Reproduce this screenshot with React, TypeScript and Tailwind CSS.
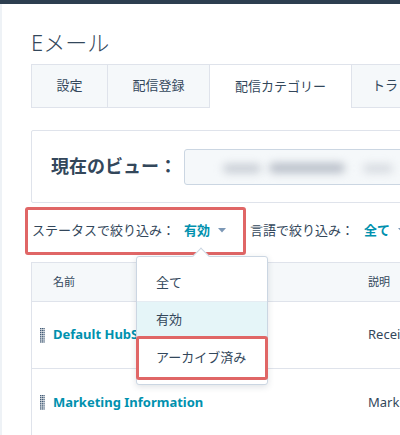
import React from "react";

const font = { fontFamily: '"Noto Sans", "Noto Sans CJK JP", sans-serif' };

function Caret({ color = "#7c98b6" }: { color?: string }) {
  return (
    <svg width="8" height="5" viewBox="0 0 8 5" className="ml-[8px] shrink-0">
      <path d="M0 0 L8 0 L4 4.5 Z" fill={color} />
    </svg>
  );
}

function Handle() {
  const dots = [];
  for (let r = 0; r < 8; r++) {
    for (let c = 0; c < 3; c++) {
      dots.push(<rect key={`${r}-${c}`} x={c * 1.7} y={r * 1.9} width="1.3" height="1.3" fill="#425b76" />);
    }
  }
  return (
    <svg width="5" height="15" viewBox="0 0 5 15" className="shrink-0">
      {dots}
    </svg>
  );
}

export default function App() {
  return (
    <div className="relative w-[400px] h-[435px] overflow-hidden bg-white text-[#33475b]" style={font}>
      <div className="h-[4px] bg-[#2d3e50]" />
      <div className="border-l-2 border-[#eef2f6] h-[431px] pl-[29px]">
        <div className="pt-[23px] h-[60px] text-[22px] leading-[30px] font-light text-[#33475b]">Eメール</div>
        <div className="flex h-[44px] text-[13px] text-[#33475b] w-[400px]">
          <div className="shrink-0 w-[77px] flex items-center justify-center bg-[#f5f8fa] border border-[#dfe3eb]">設定</div>
          <div className="shrink-0 w-[102px] flex items-center justify-center bg-[#f5f8fa] border border-l-0 border-[#dfe3eb]">配信登録</div>
          <div className="shrink-0 w-[141px] flex items-center justify-center bg-white border-t border-[#dfe3eb]">配信カテゴリー</div>
          <div className="shrink-0 w-[100px] flex items-center pl-[20px] bg-[#f5f8fa] border border-[#dfe3eb] whitespace-nowrap">トラッキング</div>
        </div>
        <div className="h-[22px]" />
        <div className="flex items-center h-[73px] border border-[#dfe3eb] rounded-[2px] pl-[19px] w-[400px]">
          <div className="shrink-0 text-[18px] font-bold text-[#33475b] w-[133px] whitespace-nowrap">現在のビュー：</div>
          <div className="shrink-0 relative h-[36px] w-[240px] bg-[#f5f8fa] border border-[#cbd6e2] rounded-[3px] overflow-hidden">
            <div className="absolute left-[38px] top-[14px] w-[38px] h-[9px] rounded-full bg-[#c7ccd4] blur-[4px]" />
            <div className="absolute left-[84px] top-[13px] w-[76px] h-[10px] rounded-full bg-[#b8bec8] blur-[4px]" />
            <div className="absolute left-[178px] top-[14px] w-[30px] h-[9px] rounded-full bg-[#d6dae0] blur-[4px]" />
          </div>
        </div>
        <div className="flex items-center h-[52px] pt-[3px] text-[13px] whitespace-nowrap w-[420px]">
          <span className="shrink-0 pl-[1px]">ステータスで絞り込み：</span>
          <span className="shrink-0 ml-[9px] font-bold text-[#0091ae]">有効</span>
          <Caret />
          <span className="shrink-0 ml-[24px]">言語で絞り込み：</span>
          <span className="shrink-0 ml-[10px] font-bold text-[#0091ae]">全て</span>
          <Caret />
        </div>
        <div className="h-[7px]" />
        <div className="w-[400px] border-l border-[#dfe3eb]">
          <div className="flex items-center h-[40px] bg-[#f5f8fa] border-t border-b border-[#dfe3eb] text-[11px] text-[#33475b]">
            <span className="shrink-0 pl-[21px] w-[336px]">名前</span>
            <span className="shrink-0">説明</span>
          </div>
          <div className="flex items-center h-[67px] border-b border-[#dfe3eb] text-[13px]">
            <div className="shrink-0 pl-[8px] w-[336px] flex items-center gap-[8px]">
              <Handle />
              <span className="font-bold text-[#0091ae] whitespace-nowrap">Default HubSpot Subscription</span>
            </div>
            <span className="shrink-0 text-[#33475b] whitespace-nowrap">Receive emails</span>
          </div>
          <div className="flex items-center h-[67px] text-[13px]">
            <div className="shrink-0 pl-[8px] w-[336px] flex items-center gap-[8px]">
              <Handle />
              <span className="font-bold text-[#0091ae] whitespace-nowrap">Marketing Information</span>
            </div>
            <span className="shrink-0 text-[#33475b] whitespace-nowrap">Marketing</span>
          </div>
        </div>
      </div>

      {/* status filter highlight */}
      <div className="absolute left-[25px] top-[207px] w-[221px] h-[48px] border-[3px] border-[#e06666] rounded-[3px]" />

      {/* dropdown */}
      <div className="absolute left-[136px] top-[256px] w-[132px] bg-white border border-[#cbd6e2] rounded-[3px] shadow-[0_2px_6px_rgba(45,62,80,0.15)] text-[13px] text-[#33475b]">
        <div className="absolute left-[58px] -top-[7px] w-[12px] h-[12px] bg-white border-l border-t border-[#cbd6e2] rotate-45" />
        <div className="relative h-[44px] flex items-center pl-[19px] pt-[8px]">全て</div>
        <div className="h-[36px] flex items-center pl-[19px] bg-[#e5f5f8] border-t border-[#e5ecf2]">有効</div>
        <div className="h-[47px] flex items-center pl-[19px] pb-[6px]">アーカイブ済み</div>
      </div>
      <div className="absolute left-[136px] top-[336px] w-[132px] h-[44px] border-[3px] border-[#e06666] rounded-[3px]" />
    </div>
  );
}
